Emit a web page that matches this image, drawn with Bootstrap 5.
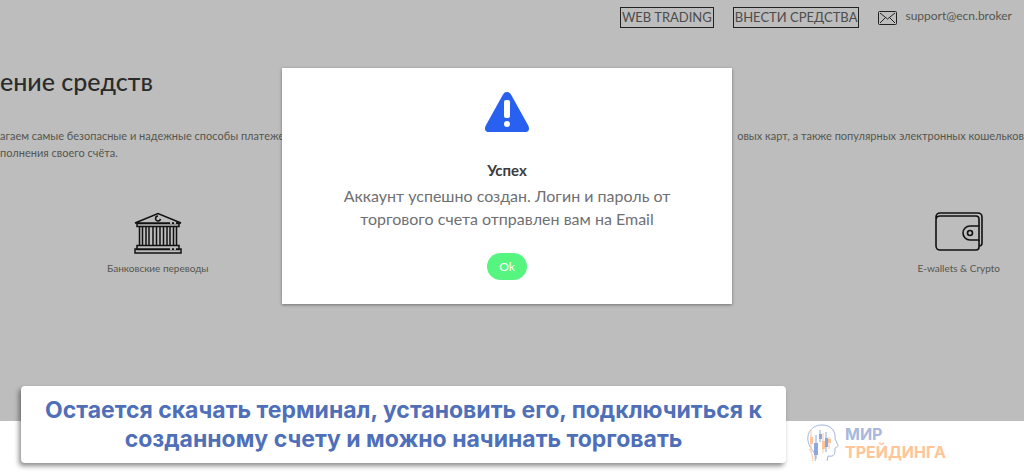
<!DOCTYPE html>
<html lang="ru">
<head>
<meta charset="utf-8">
<meta name="viewport" content="width=device-width, initial-scale=1">
<title>Пополнение средств</title>
<link rel="stylesheet" href="https://cdn.jsdelivr.net/npm/bootstrap@5.3.0/dist/css/bootstrap.min.css">
<style>
  body { font-family: Lato, "Open Sans", sans-serif; color: #55564f; background: #fff; }
  .page { min-height: 100vh; padding-bottom: 52px; overflow: hidden; }
  .shaded { background: #bdbdbd; }
  .topbar { padding: 7px 12px 0 0; gap: 19px; }
  .top-link { border: 1px solid #222; color: #4c4c4c; font-size: 13px; line-height: 19px; padding: 0 1px; text-decoration: none; }
  .mail-link { color: #55564f; font-size: 12px; line-height: 18px; gap: 8px; text-decoration: none; }
  .page-title { color: #2b2b2b; font-size: 25px; line-height: 30px; margin: 38px 0 0; }
  .intro { font-size: 11px; line-height: 17px; margin: 31px 0 0; }
  .methods { padding: 51px 24px 0 107px; }
  .method { font-size: 10px; line-height: 16px; gap: 6px; }
  .dialog-layer { top: 68px; padding-right: 10px; }
  .notice { width: 450px; padding: 24px 48px; background: #fff; box-shadow: 0 1px 3px rgba(0,0,0,.4); }
  .notice-title { color: #3b3c40; font-size: 15px; line-height: 20px; font-weight: 700; margin: 28px 0 4px; }
  .notice-text { color: #6f7073; font-size: 16px; line-height: 23px; margin: 0 0 23px; }
  .ok-btn { --bs-btn-color: #fff; --bs-btn-bg: #55f580; --bs-btn-hover-color: #fff; --bs-btn-hover-bg: #42e36d; --bs-btn-font-size: 12px; --bs-btn-line-height: 17px; --bs-btn-padding-y: 4px; --bs-btn-padding-x: 11px; }
  .caption-row { padding: 0 0 10px 21px; gap: 20px; }
  .caption-box { width: 765px; padding: 10px 16px 9px; background: #fff; color: #4f6fb8; border-radius: 4px; box-shadow: -2px 3px 5px rgba(0,0,0,.45); font: 700 23px/29px Inter, sans-serif; }
  .brand { gap: 5px; font: 700 16px/18px Inter, sans-serif; color: #a9b9dd; }
  .brand-second { color: #ffc597; }
</style>
</head>
<body>
<div class="page position-relative d-flex flex-column">
  <div class="shaded flex-grow-1">
    <header class="topbar d-flex justify-content-end align-items-start">
      <a class="top-link" href="#">WEB TRADING</a>
      <a class="top-link" href="#">ВНЕСТИ СРЕДСТВА</a>
      <a class="mail-link d-flex" href="#">
        <svg class="mt-1" width="19" height="14" viewBox="0 0 19 14" fill="none" stroke="#222" aria-hidden="true"><rect x=".5" y=".5" width="18" height="13" rx="1"/><path d="M2 2l7.500 6L17 2M2 12l5-5M17 12l-5-5"/></svg>
        <span>support@ecn.broker</span>
      </a>
    </header>
    <main>
      <h1 class="page-title">ение средств</h1>
      <div class="intro text-nowrap">
        <div class="d-flex justify-content-between"><span>агаем самые безопасные и надежные способы платежей</span><span>овых карт, а также популярных электронных кошельков</span></div>
        <div>полнения своего счёта.</div>
      </div>
      <div class="methods d-flex justify-content-between">
        <div class="method d-flex flex-column align-items-center">
          <svg width="48" height="42" viewBox="0 0 48 42" fill="none" stroke="#111" stroke-width="1.500" aria-hidden="true">
            <path d="M1 11L24 1.500 47 11zM3 11.500h42v3H3z"/><path d="M24 4a2.500 2.500 0 1 0 2.500 3"/>
            <path d="M5.500 15v18M8.500 15v18M12 15v18M15 15v18M19 15v18M22.500 15v18M26 15v18M29.500 15v18M33 15v18M36 15v18M39.500 15v18M42.500 15v18"/>
            <path d="M3 33.500h42v4H3zM1 37h46v4H1z"/><path d="M36 11h2M40 11h2M36 37h2M40 37h2" stroke="#ddd"/>
          </svg>
          <span>Банковские переводы</span>
        </div>
        <div class="method d-flex flex-column align-items-center">
          <svg width="48" height="42" viewBox="0 0 48 42" fill="none" stroke="#111" stroke-width="1.600" aria-hidden="true">
            <path d="M1 7V5a4 4 0 0 1 4-4h38a4 4 0 0 1 4 4v26a3 3 0 0 1-3 3v1a3 3 0 0 1-3 3H5a4 4 0 0 1-4-4V8c0-3 2-4 4-4h36a3 3 0 0 1 3 3v7M44 28v6"/>
            <path d="M44 14H35a7 7 0 0 0 0 14h9z"/><circle cx="35" cy="21" r="2.500"/>
          </svg>
          <span>E-wallets &amp; Crypto</span>
        </div>
      </div>
    </main>
  </div>

  <div class="dialog-layer position-absolute start-0 end-0 d-flex justify-content-center">
    <section class="notice text-center" role="dialog" aria-labelledby="notice-title">
      <svg class="d-block mx-auto" width="46" height="40" viewBox="0 0 46 40" aria-hidden="true"><path fill="#2860f0" d="M19 2.500a4.500 4.500 0 0 1 8 0L44.500 34q2 6-4 6h-35q-6 0-4-6z"/><rect x="20" y="8" width="6" height="18" rx="2" fill="#fff"/><circle cx="23" cy="32" r="3" fill="#fff"/></svg>
      <h2 class="notice-title" id="notice-title">Успех</h2>
      <p class="notice-text">Аккаунт успешно создан. Логин и пароль от торгового счета отправлен вам на Email</p>
      <button type="button" class="btn ok-btn rounded-pill">Ok</button>
    </section>
  </div>

  <div class="caption-row position-absolute start-0 end-0 bottom-0 d-flex align-items-end">
    <div class="caption-box text-center">Остается скачать терминал, установить его, подключиться к созданному счету и можно начинать торговать</div>
    <div class="brand d-flex align-items-center">
      <svg width="34" height="40" viewBox="0 0 34 40" fill="none" aria-hidden="true">
        <path stroke="#a0b4df" d="M9 38c1-6-1-9-4-13C-2 15 3 2 16 2c9 0 14 6 13 14l3 6c1 2-2 2-3 3 0 6 0 9-7 8l-1 5"/>
        <path stroke="#ffc597" d="M3 26c3 4 4 7 3 12M5 7v22M17 10v20M23 14v12"/>
        <path fill="#ffc597" d="M4 14h3v7H4zM16 18h3v8h-3zM22 16h3v4h-3z"/>
        <path stroke="#8ea7dc" d="M10 12v24M14 7v12M20 9v20"/>
        <path fill="#8ea7dc" d="M8 20h4v12H8zM13 11h3v5h-3zM19 15h3v9h-3z"/>
      </svg>
      <div><div>МИР</div><div class="brand-second">ТРЕЙДИНГА</div></div>
    </div>
  </div>
</div>
<script src="https://cdn.jsdelivr.net/npm/bootstrap@5.3.0/dist/js/bootstrap.bundle.min.js"></script>
</body>
</html>
